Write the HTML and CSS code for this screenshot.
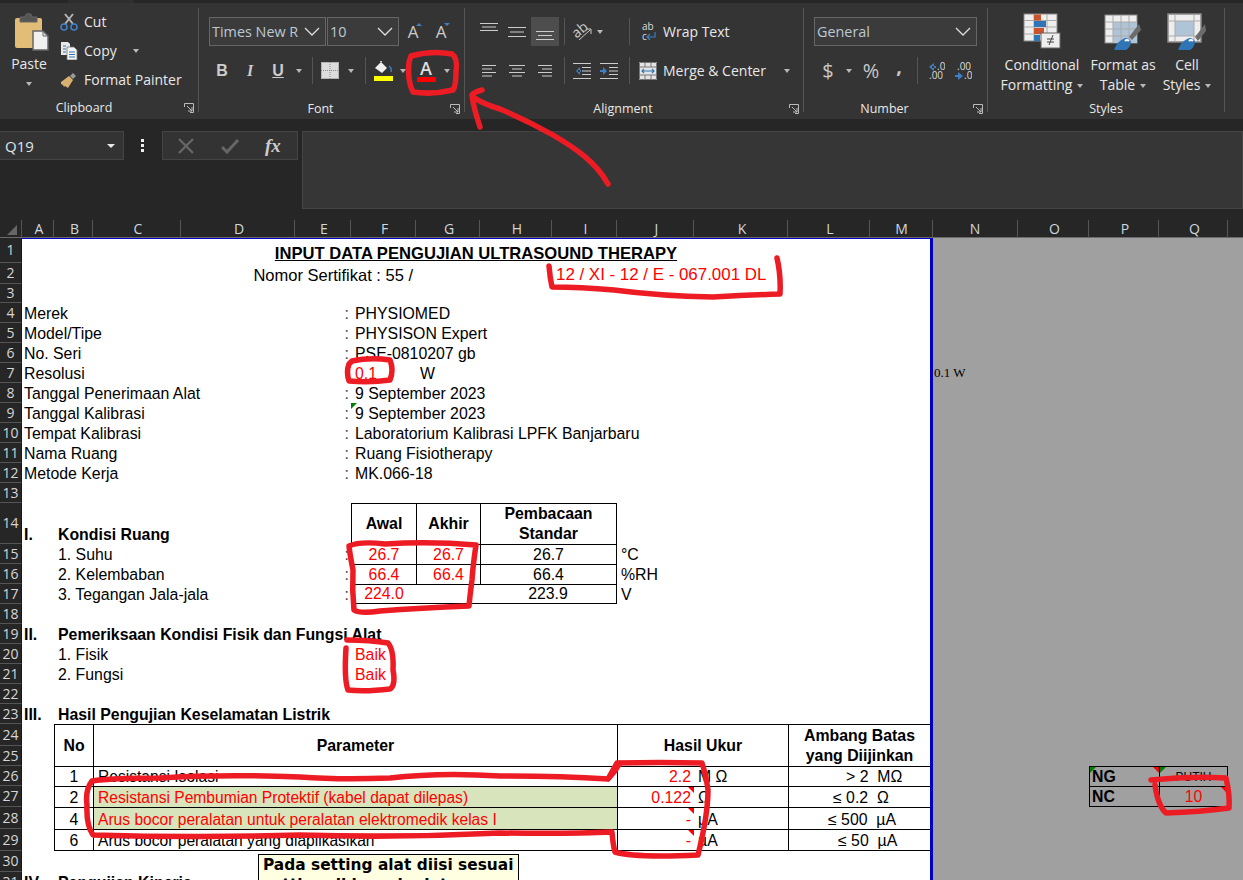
FILE: index.html
```html
<!DOCTYPE html>
<html lang="id">
<head>
<meta charset="utf-8">
<title>Input Data Pengujian Ultrasound Therapy</title>
<link rel="stylesheet" href="styles.css">
</head>
<body>
<div class="app">
  <div class="strip"><span class="stub"></span></div>
  <div class="ribbon">
    <section class="group g-clip">
      <div class="body clip-body">
        <div class="paste">
          <svg class="paste-i" width="36" height="38" viewBox="0 0 36 38"><rect x="1" y="5" width="27" height="30" rx="2" fill="#e1bd78"/><path d="M6 9V4h5a3.500 3.500 0 0 1 7 0h5v5z" fill="#555" stroke="#666"/><path d="M19 18h10l5 5v14H19z" fill="#f0f0f0" stroke="#666" stroke-width="1.500"/><path d="M29 18v5h5" fill="none" stroke="#666"/></svg>
          <span class="paste-t">Paste</span>
          <i class="caret"></i>
        </div>
        <div class="clip-list">
          <div class="clip-row"><svg width="18" height="18" viewBox="0 0 18 18"><path d="M5 11 13 1M13 11 5 1" stroke="#b5b5b5" stroke-width="2"/><circle cx="4" cy="14" r="3" fill="none" stroke="#3f7fc4" stroke-width="1.600"/><circle cx="14" cy="14" r="3" fill="none" stroke="#3f7fc4" stroke-width="1.600"/></svg><span>Cut</span></div>
          <div class="clip-row"><svg width="18" height="18" viewBox="0 0 18 18"><path d="M1 0h7l2 2v11H1z" fill="#e8e8e8"/><path d="M7 5h7l3 3v10H7z" fill="#f4f4f4" stroke="#777" stroke-width=".8"/><path d="M3 4h3M3 7h3M3 10h3M9 10h6M9 12.500h6M9 15h6" stroke="#2f75b5"/></svg><span>Copy</span><i class="caret copy-caret"></i></div>
          <div class="clip-row"><svg width="18" height="18" viewBox="0 0 18 18"><path d="M1 11 9 5l4 4-5 8-3-2-1 1-1-2-2-1z" fill="#d9b26f"/><path d="M10 5l3-3 3 3-3 3z" fill="#9a9a9a"/></svg><span>Format Painter</span></div>
        </div>
      </div>
      <footer class="label"><span class="label-t clip-t">Clipboard</span><svg class="launch" width="10" height="10" viewBox="0 0 10 10"><path d="M.5 4V.5h9v9H6M3 3l5 5M8 4v4H4" fill="none" stroke="#bbb"/></svg></footer>
    </section>

    <section class="group g-font">
      <div class="body">
        <div class="row">
          <div class="select s-font"><span>Times New R</span><svg class="chev" width="16" height="9" viewBox="0 0 16 9"><path d="M1 1l7 7 7-7" fill="none" stroke="#ddd" stroke-width="1.300"/></svg></div>
          <div class="select s-size"><span>10</span><svg class="chev" width="16" height="9" viewBox="0 0 16 9"><path d="M1 1l7 7 7-7" fill="none" stroke="#ddd" stroke-width="1.300"/></svg></div>
          <div class="tb w28 gs">A<i class="up"></i></div>
          <div class="tb w28 gs">A<i class="down"></i></div>
        </div>
        <div class="row row2">
          <div class="tb w26 bold">B</div>
          <div class="tb w30 ital">I</div>
          <div class="tb w26 bold und">U</div>
          <div class="tb w16"><i class="caret"></i></div>
          <i class="sep"></i>
          <div class="tb w24"><svg width="18" height="17" viewBox="0 0 18 17"><rect width="18" height="17" fill="#dcdcdc"/><path d="M9 0v17M0 8.500h18" stroke="#8a8a8a" stroke-dasharray="1 1"/><rect x=".5" y=".5" width="17" height="16" fill="none" stroke="#8a8a8a" stroke-dasharray="1 1"/></svg></div>
          <div class="tb w18"><i class="caret"></i></div>
          <i class="sep"></i>
          <div class="tb w24 stack"><svg width="20" height="14" viewBox="0 0 20 14"><path d="M2 7l6-6 6 6-5 5z" fill="#f0f0f0"/><path d="M8 1V0" stroke="#ccc" stroke-width="2"/><path d="M16 5q3 2 2 6" fill="none" stroke="#3f7fc4" stroke-width="1.500"/></svg><i class="bar yellow"></i></div>
          <div class="tb w16"><i class="caret"></i></div>
          <div class="tb w30 stack"><span class="fc">A</span><i class="bar bar-red"></i></div>
          <div class="tb w12"><i class="caret"></i></div>
        </div>
      </div>
      <footer class="label"><span class="label-t">Font</span><svg class="launch" width="10" height="10" viewBox="0 0 10 10"><path d="M.5 4V.5h9v9H6M3 3l5 5M8 4v4H4" fill="none" stroke="#bbb"/></svg></footer>
    </section>

    <section class="group g-align">
      <div class="body">
        <div class="row">
          <div class="tb w28"><svg width="18" height="18" viewBox="0 0 18 18"><path d="M0 .5h18M2 4h14M0 7.500h18" stroke="#ccc"/></svg></div>
          <div class="tb w28"><svg width="18" height="18" viewBox="0 0 18 18"><path d="M0 4.500h18M2 9h14M0 13.500h18" stroke="#ccc"/></svg></div>
          <div class="tb w28 active"><svg width="18" height="18" viewBox="0 0 18 18"><path d="M0 8.500h18M2 12.500h14M0 16.500h18" stroke="#ccc"/></svg></div>
          <i class="sep"></i>
          <div class="tb w24"><svg width="20" height="20" viewBox="0 0 20 20"><text x="1" y="13" class="orient" transform="rotate(-40 8 10)">ab</text><path d="M7 18 18 8M14 7h5v5" fill="none" stroke="#ccc"/></svg></div>
          <div class="tb w12"><i class="caret"></i></div>
          <div class="w18"></div>
          <i class="sep"></i>
          <div class="btn"><svg class="wrap-i" width="18" height="20" viewBox="0 0 18 20"><text x="3" y="8" class="small-t">ab</text><text x="3" y="18" class="small-t">c</text><path d="M16 10v5H9M11 12l-3 3 3 3" fill="none" stroke="#3f7fc4" stroke-width="1.200"/></svg><span>Wrap Text</span></div>
        </div>
        <div class="row row2">
          <div class="tb w28"><svg width="14" height="12" viewBox="0 0 14 12"><path d="M0 .5h14M0 4h10M0 7.500h14M0 11h10" stroke="#ccc"/></svg></div>
          <div class="tb w28"><svg width="16" height="12" viewBox="0 0 16 12"><path d="M0 .5h16M3 4h10M0 7.500h16M3 11h10" stroke="#ccc"/></svg></div>
          <div class="tb w28"><svg width="14" height="12" viewBox="0 0 14 12"><path d="M0 .5h14M4 4h10M0 7.500h14M4 11h10" stroke="#ccc"/></svg></div>
          <i class="sep"></i>
          <div class="tb w24"><svg width="18" height="16" viewBox="0 0 18 16"><path d="M0 .5h18M9 4.500h9M9 8h9M9 11.500h9M0 15.500h18" stroke="#ccc"/><path d="M7 4 3 8l4 4zM5 7h3v2H5z" fill="#3f7fc4"/></svg></div>
          <div class="tb w30"><svg width="18" height="16" viewBox="0 0 18 16"><path d="M0 .5h18M9 4.500h9M9 8h9M9 11.500h9M0 15.500h18" stroke="#ccc"/><path d="M3 4l4 4-4 4zM0 7h4v2H0z" fill="#3f7fc4"/></svg></div>
          <i class="sep"></i>
          <div class="btn"><svg width="18" height="18" viewBox="0 0 18 18"><rect width="18" height="18" fill="#e4e4e4"/><path d="M.5.500h17v17H.5zM0 5h18M0 13h18M6 0v5M12 0v5M6 13v5M12 13v5" fill="none" stroke="#777"/><path d="M3 9h12M5 7 3 9l2 2M13 7l2 2-2 2" fill="none" stroke="#2f75b5" stroke-width="1.200"/></svg><span>Merge &amp; Center</span><i class="caret merge-caret"></i></div>
        </div>
      </div>
      <footer class="label"><span class="label-t">Alignment</span><svg class="launch" width="10" height="10" viewBox="0 0 10 10"><path d="M.5 4V.5h9v9H6M3 3l5 5M8 4v4H4" fill="none" stroke="#bbb"/></svg></footer>
    </section>

    <section class="group g-num">
      <div class="body">
        <div class="row">
          <div class="select s-num"><span>General</span><svg class="chev" width="16" height="9" viewBox="0 0 16 9"><path d="M1 1l7 7 7-7" fill="none" stroke="#ddd" stroke-width="1.300"/></svg></div>
        </div>
        <div class="row row2">
          <div class="tb w28 big">$</div>
          <div class="tb w14"><i class="caret"></i></div>
          <div class="tb w30 big">%</div>
          <div class="tb w26 big comma">,</div>
          <i class="sep"></i>
          <div class="tb w26"><svg width="18" height="18" viewBox="0 0 18 18"><path d="M7 1 2 5l5 4zM5 4h4v2H5z" fill="#3f7fc4"/><text x="10" y="8" class="dec">.0</text><text x="2" y="17" class="dec">.00</text></svg></div>
          <div class="tb w28"><svg width="18" height="18" viewBox="0 0 18 18"><text x="3" y="8" class="dec">.00</text><path d="M4 10l5 4-5 4zM1 13h4v2H1z" fill="#3f7fc4"/><text x="10" y="17" class="dec">.0</text></svg></div>
        </div>
      </div>
      <footer class="label"><span class="label-t">Number</span><svg class="launch" width="10" height="10" viewBox="0 0 10 10"><path d="M.5 4V.5h9v9H6M3 3l5 5M8 4v4H4" fill="none" stroke="#bbb"/></svg></footer>
    </section>

    <section class="group g-styles">
      <div class="body styles-body">
        <div class="st st1">
          <svg width="38" height="38" viewBox="0 0 38 38"><rect x="1" y="1" width="33" height="27" fill="#eee" stroke="#888"/><path d="M1 7.500h33M1 14h33M1 21h33M11 1v27M24 1v27" stroke="#aaa"/><rect x="11" y="1.500" width="7" height="6" fill="#c9532d"/><rect x="11" y="8" width="12" height="6" fill="#2f75b5"/><rect x="11" y="15" width="10" height="6" fill="#c9532d"/><rect x="11" y="22" width="6" height="6" fill="#2f75b5"/><rect x="18" y="20" width="19" height="15" fill="#eee" stroke="#666"/><path d="M24 26h7M24 29h7M26 32l4-10" stroke="#444" fill="none"/></svg>
          <span class="st-t">Conditional<br>Formatting<i class="caret in"></i></span>
        </div>
        <div class="st st2">
          <svg width="38" height="38" viewBox="0 0 38 38"><rect x="1" y="2" width="32" height="28" fill="#eee" stroke="#888"/><rect x="9" y="9" width="24" height="21" fill="#b0c4d8"/><path d="M1 9h32M1 16h32M1 23h32M9 2v28M17 2v28M25 2v28" stroke="#aaa"/><path d="M25 24 35 11l2 6-9 10z" fill="#6b6b6b"/><path d="M10 37q3-9 11-12 5 0 6 4-1 6-5 8z" fill="#2f75b5"/><path d="M21 28q2-2 4 0" stroke="#fff" stroke-width="2" fill="none"/></svg>
          <span class="st-t">Format as<br>Table<i class="caret in"></i></span>
        </div>
        <div class="st st3">
          <svg width="40" height="38" viewBox="0 0 40 38"><rect x="1" y="1" width="33" height="28" fill="#eee" stroke="#888" stroke-width="1.500"/><rect x="8" y="8" width="19" height="15" fill="#b0c4d8"/><path d="M1 8h33M1 23h33M8 1v28M27 1v28" stroke="#aaa"/><path d="M28 24 38 11l1 7-8 10z" fill="#6b6b6b"/><path d="M11 37q3-9 11-12 5 0 6 4-1 6-5 8z" fill="#2f75b5"/><path d="M22 28q2-2 4 0" stroke="#fff" stroke-width="2" fill="none"/></svg>
          <span class="st-t">Cell<br>Styles<i class="caret in"></i></span>
        </div>
      </div>
      <footer class="label"><span class="label-t styles-t">Styles</span></footer>
    </section>
  </div>

  <div class="formula">
    <div class="namebox"><span>Q19</span><i class="caret light"></i></div>
    <div class="dots"><i></i><i></i><i></i></div>
    <div class="cmds">
      <svg width="16" height="16" viewBox="0 0 16 16"><path d="M1 1l14 14M15 1 1 15" stroke="#666" stroke-width="2.400"/></svg>
      <svg width="18" height="16" viewBox="0 0 18 16"><path d="M1 9l5 5L17 2" fill="none" stroke="#666" stroke-width="3"/></svg>
      <span class="fx">fx</span>
    </div>
    <div class="input"></div>
  </div>

  <div class="sheet">
    <table class="grid">
      <colgroup>
        <col class="c0"><col class="ca"><col class="cb"><col class="cc"><col class="cd"><col class="ce"><col class="cf"><col class="cg"><col class="ch"><col class="ci"><col class="cj"><col class="ck"><col class="cl"><col class="cm"><col class="cn"><col class="co"><col class="cp"><col class="cq"><col class="cr">
      </colgroup>
      <thead>
        <tr class="head">
          <th class="corner"><i></i></th><th>A</th><th>B</th><th>C</th><th>D</th><th>E</th><th>F</th><th>G</th><th>H</th><th>I</th><th>J</th><th>K</th><th>L</th><th class="hm">M</th><th class="hn">N</th><th>O</th><th>P</th><th>Q</th><th class="hr"></th>
        </tr>
      </thead>
      <tbody>
        <tr class="h25 first"><th>1</th><td colspan="13" class="title">INPUT DATA PENGUJIAN ULTRASOUND THERAPY</td><td colspan="5" class="out"></td></tr>
        <tr class="h21"><th>2</th><td colspan="6" class="cert">Nomor Sertifikat : 55 /</td><td colspan="2"></td><td colspan="5" class="red p4 serial">12 / XI - 12 / E - 067.001 DL</td><td colspan="5" class="out"></td></tr>
        <tr class="h19"><th>3</th><td colspan="13"></td><td colspan="5" class="out"></td></tr>
        <tr><th>4</th><td colspan="4" class="p2">Merek</td><td class="colon">:</td><td colspan="8" class="p4">PHYSIOMED</td><td colspan="5" class="out"></td></tr>
        <tr><th>5</th><td colspan="4" class="p2">Model/Tipe</td><td class="colon">:</td><td colspan="8" class="p4">PHYSISON Expert</td><td colspan="5" class="out"></td></tr>
        <tr><th>6</th><td colspan="4" class="p2">No. Seri</td><td class="colon">:</td><td colspan="8" class="p4">PSE-0810207 gb</td><td colspan="5" class="out"></td></tr>
        <tr><th>7</th><td colspan="4" class="p2">Resolusi</td><td class="colon">:</td><td class="red p4">0.1</td><td class="p4">W</td><td colspan="6"></td><td colspan="5" class="out note">0.1 W</td></tr>
        <tr><th>8</th><td colspan="4" class="p2">Tanggal Penerimaan Alat</td><td class="colon">:</td><td colspan="8" class="p4">9 September 2023</td><td colspan="5" class="out"></td></tr>
        <tr><th>9</th><td colspan="4" class="p2">Tanggal Kalibrasi</td><td class="colon">:</td><td colspan="8" class="p4 tg">9 September 2023</td><td colspan="5" class="out"></td></tr>
        <tr><th>10</th><td colspan="4" class="p2">Tempat Kalibrasi</td><td class="colon">:</td><td colspan="8" class="p4">Laboratorium Kalibrasi LPFK Banjarbaru</td><td colspan="5" class="out"></td></tr>
        <tr><th>11</th><td colspan="4" class="p2">Nama Ruang</td><td class="colon">:</td><td colspan="8" class="p4">Ruang Fisiotherapy</td><td colspan="5" class="out"></td></tr>
        <tr><th>12</th><td colspan="4" class="p2">Metode Kerja</td><td class="colon">:</td><td colspan="8" class="p4">MK.066-18</td><td colspan="5" class="out"></td></tr>
        <tr><th>13</th><td colspan="13"></td><td colspan="5" class="out"></td></tr>
        <tr class="h40"><th>14</th><td class="b p2">I.</td><td colspan="4" class="b p4">Kondisi Ruang</td><td class="b ctr mid bt bl">Awal</td><td class="b ctr mid bt bl">Akhir</td><td colspan="2" class="b ctr mid bt bl br">Pembacaan<br>Standar</td><td colspan="4"></td><td colspan="5" class="out"></td></tr>
        <tr><th>15</th><td></td><td colspan="3" class="p4">1. Suhu</td><td class="colon">:</td><td class="red ctr bt bl">26.7</td><td class="red ctr bt bl">26.7</td><td colspan="2" class="ctr bt bl br">26.7</td><td colspan="4" class="p4">°C</td><td colspan="5" class="out"></td></tr>
        <tr><th>16</th><td></td><td colspan="3" class="p4">2. Kelembaban</td><td class="colon">:</td><td class="red ctr bt bl">66.4</td><td class="red ctr bt bl">66.4</td><td colspan="2" class="ctr bt bl br">66.4</td><td colspan="4" class="p4">%RH</td><td colspan="5" class="out"></td></tr>
        <tr><th>17</th><td></td><td colspan="3" class="p4">3. Tegangan Jala-jala</td><td class="colon">:</td><td class="red ctr bt bl bb">224.0</td><td class="bt bb"></td><td colspan="2" class="ctr bt br bb">223.9</td><td colspan="4" class="p4">V</td><td colspan="5" class="out"></td></tr>
        <tr><th>18</th><td colspan="13"></td><td colspan="5" class="out"></td></tr>
        <tr><th>19</th><td class="b p2">II.</td><td colspan="12" class="b p4">Pemeriksaan Kondisi Fisik dan Fungsi Alat</td><td colspan="5" class="out"></td></tr>
        <tr><th>20</th><td></td><td colspan="4" class="p4">1. Fisik</td><td colspan="8" class="red p4">Baik</td><td colspan="5" class="out"></td></tr>
        <tr><th>21</th><td></td><td colspan="4" class="p4">2. Fungsi</td><td colspan="8" class="red p4">Baik</td><td colspan="5" class="out"></td></tr>
        <tr><th>22</th><td colspan="13"></td><td colspan="5" class="out"></td></tr>
        <tr><th>23</th><td class="b p2">III.</td><td colspan="12" class="b p4">Hasil Pengujian Keselamatan Listrik</td><td colspan="5" class="out"></td></tr>
        <tr class="h22"><th>24</th><td rowspan="2"></td><td rowspan="2" class="b ctr mid bt bl">No</td><td rowspan="2" colspan="7" class="b ctr mid bt bl">Parameter</td><td rowspan="2" colspan="2" class="b ctr mid bt bl">Hasil Ukur</td><td rowspan="2" colspan="2" class="b ctr mid bt bl">Ambang Batas<br>yang Diijinkan</td><td colspan="5" class="out"></td></tr>
        <tr><th>25</th><td colspan="5" class="out"></td></tr>
        <tr><th>26</th><td></td><td class="ctr bt bl">1</td><td colspan="7" class="p4 bt bl param">Resistansi Isolasi</td><td class="red rt bt bl">2.2</td><td class="p4 bt">M Ω</td><td colspan="2" class="bt bl a1">&gt; 2&nbsp; MΩ</td><td colspan="2" class="out"></td><td class="b bt bl p2 box tg tr">NG</td><td class="ctr bt bl br box tg small">PUTIH</td><td class="out2"></td></tr>
        <tr class="h21"><th>27</th><td></td><td class="ctr bt bl">2</td><td colspan="7" class="p4 bt bl red fill param">Resistansi Pembumian Protektif (kabel dapat dilepas)</td><td class="red rt bt bl tr">0.122</td><td class="p4 bt">Ω</td><td colspan="2" class="bt bl a2">≤ 0.2&nbsp; Ω</td><td colspan="2" class="out"></td><td class="b bt bl bb p2 box">NC</td><td class="red ctr bt bl br bb box tr">10</td><td class="out2"></td></tr>
        <tr class="h22"><th>28</th><td></td><td class="ctr bt bl">4</td><td colspan="7" class="p4 bt bl red fill param">Arus bocor peralatan untuk peralatan elektromedik kelas I</td><td class="red rt bt bl tr">-</td><td class="p4 bt">µA</td><td colspan="2" class="bt bl a3">≤ 500&nbsp; µA</td><td colspan="5" class="out"></td></tr>
        <tr class="h22"><th>29</th><td></td><td class="ctr bt bl bb">6</td><td colspan="7" class="p4 bt bl bb param">Arus bocor peralatan yang diaplikasikan</td><td class="red rt bt bl bb tr">-</td><td class="p4 bt bb">µA</td><td colspan="2" class="bt bl bb a4">≤ 50&nbsp; µA</td><td colspan="5" class="out"></td></tr>
        <tr class="h21"><th>30</th><td colspan="13"></td><td colspan="5" class="out"></td></tr>
        <tr><th>31</th><td class="b p2">IV.</td><td colspan="12" class="b p4">Pengujian Kinerja</td><td colspan="5" class="out"></td></tr>
      </tbody>
    </table>
    <div class="comment">Pada setting alat diisi sesuai<br>setting di bawah alat</div>
  </div>

  <svg class="marks" width="1243" height="880" viewBox="0 0 1243 880" aria-hidden="true">
    <path d="M411 56Q432 50 452 54Q458 58 456 72Q456 86 453 90Q432 95 413 92Q407 80 409 62Z"/>
    <path d="M608 184C596 162 575 148 553 135C530 122 512 114 500 109C490 106 480 102 473 97M480 127C476 115 473 105 472 95C474 92 478 91 482 90"/>
    <path d="M549 266Q550 278 552 287Q580 287 614 290Q660 296 713 297Q750 295 780 294Q781 275 777 258"/>
    <path d="M352 361Q370 357 390 360Q394 370 390 380Q370 383 349 381Q346 372 349 364Z"/>
    <path d="M349 546Q360 541 385 544Q430 541 476 545Q473 565 472 580Q470 595 469 606Q420 608 380 611Q360 614 354 610Q352 590 353 570Q350 555 349 546Z"/>
    <path d="M347 640Q370 640 388 643Q394 650 393 670Q396 685 390 689Q365 692 348 690Q344 680 346 648"/>
    <path d="M620 763Q615 772 608 779Q560 776 500 776Q440 772 390 778Q340 780 300 777Q220 774 160 778Q110 778 92 781Q85 790 87 805Q86 825 93 835Q200 838 300 835Q400 838 500 833Q570 834 612 832Q613 845 615 852Q635 858 698 855Q708 815 708 790Q706 775 702 763Q660 762 617 763Q612 772 608 779"/>
    <path d="M1151 780Q1190 776 1226 778Q1230 795 1229 808Q1200 812 1166 813Q1158 806 1155 785"/>
  </svg>
</div>
</body>
</html>
```
FILE: styles.css
```css
* { box-sizing: border-box; }
html, body { margin: 0; height: 100%; background: #262626; }
i { display: block; font-style: normal; }
.app {
  position: relative;
  width: 1243px;
  height: 880px;
  overflow: hidden;
  display: flex;
  flex-direction: column;
  background: #262626;
  color: #e8e8e8;
  font: 14px/20px "Open Sans", "Noto Sans", sans-serif;
}

/* top strip */
.strip { height: 3px; background: #262626; padding-left: 68px; flex: none; }
.stub { display: block; width: 66px; height: 3px; background: #2e2e2e; }

/* ribbon */
.ribbon { display: flex; height: 116px; flex: none; background: #343434; }
.group {
  height: 104px;
  margin-top: 5px;
  border-right: 1px solid #555;
  display: flex;
  flex-direction: column;
  flex: none;
}
.g-clip { width: 199px; }
.g-font { width: 266px; }
.g-align { width: 339px; }
.g-num { width: 184px; }
.g-styles { width: 237px; }
.body { height: 93px; padding: 9px 0 0 10px; flex: none; }
.label {
  display: grid;
  grid-template-columns: 1fr 22px;
  align-items: center;
  height: 16px;
  margin-bottom: -13px;
  flex: none;
}
.label-t { text-align: center; font-size: 12.5px; line-height: 16px; }
.clip-t { padding-right: 8px; }
.g-styles .label { grid-template-columns: 1fr; }
.launch { justify-self: start; margin-left: 8px; }

.row { display: flex; align-items: center; height: 29px; }
.row2 { margin-top: 10px; }
.tb { display: flex; align-items: center; justify-content: center; height: 29px; flex: none; color: #ccc; position: relative; }
.w12 { width: 12px; flex: none; }
.w14 { width: 14px; flex: none; }
.w16 { width: 16px; flex: none; }
.w18 { width: 18px; flex: none; }
.w24 { width: 24px; flex: none; }
.w26 { width: 26px; flex: none; }
.w28 { width: 28px; flex: none; }
.w30 { width: 30px; flex: none; }
.active { background: #4d4d4d; }
.sep { width: 1px; height: 27px; background: #555; margin: 0 5px; flex: none; }
.caret { width: 0; height: 0; border: 3.5px solid transparent; border-top: 4px solid #b8b8b8; border-bottom: 0; flex: none; }
.caret.in { display: inline-block; margin-left: 5px; vertical-align: middle; }
.caret.light { border-top-color: #e8e8e8; border-width: 4px 4px 0; }
.bold { font: bold 16px/20px "Liberation Sans", sans-serif; }
.ital { font: italic bold 16px/20px "Liberation Serif", serif; }
.und { text-decoration: underline; }
.gs { font-size: 17px; align-items: center; }
.up, .down { position: absolute; right: 5px; top: 6px; width: 0; height: 0; border: 3px solid transparent; }
.up { border-bottom: 3px solid #3f7fc4; border-top: 0; }
.down { border-top: 3px solid #3f7fc4; border-bottom: 0; }
.stack { flex-direction: column; }
.bar { width: 19px; height: 5px; margin-top: 1px; }
.yellow { background: #ffff00; }
.bar-red { background: #ff0000; }
.fc { font-size: 18px; line-height: 16px; font-weight: 600; color: #ddd; }

.select {
  display: flex;
  align-items: center;
  justify-content: space-between;
  height: 29px;
  background: #3b3b3b;
  border: 1px solid #666;
  padding: 0 5px 0 2px;
  color: #bcc8d2;
  font-size: 14.4px;
  flex: none;
}
.s-font { width: 117px; margin-right: 1px; }
.s-font span { width: 90px; overflow: hidden; white-space: nowrap; }
.s-size { width: 72px; }
.s-num { width: 163px; }
.chev { flex: none; }

/* clipboard */
.clip-body { display: flex; padding: 0; margin-top: -1px; }
.paste { width: 60px; display: flex; flex-direction: column; align-items: center; padding: 6px 0 0; flex: none; }
.paste-i { margin-left: 4px; }
.paste-t { margin-top: 3px; margin-right: 2px; line-height: 20px; }
.paste .caret { margin-top: 8px; margin-right: 2px; }
.clip-row { display: flex; align-items: center; gap: 6px; height: 29px; white-space: nowrap; }
.clip-row svg { flex: none; }
.copy-caret { margin-left: 10px; }

/* alignment */
.btn { display: flex; align-items: center; gap: 6px; padding-left: 4px; height: 29px; white-space: nowrap; flex: none; }
.merge-caret { margin-left: 12px; }
.wrap-i { flex: none; }
.orient { font: 14px "Open Sans", sans-serif; fill: #ccc; }
.small-t { font: 10px "Open Sans", sans-serif; fill: #ddd; }
.dec { font: 10px "Open Sans", sans-serif; fill: #ddd; }
.big { font-size: 20px; color: #c8c8c8; }
.comma { font-weight: 700; align-items: flex-start; }

/* styles */
.styles-body { display: flex; padding: 5px 0 0 12px; }
.st { display: flex; flex-direction: column; align-items: center; flex: none; }
.st svg { height: 38px; flex: none; }
.st-t { text-align: center; margin-top: 4px; line-height: 20px; white-space: nowrap; }
.st1 { width: 84px; }
.st2 { width: 78px; }
.st3 { width: 50px; }

/* formula bar */
.formula { display: flex; height: 101px; padding-top: 12px; flex: none; }
.namebox { display: flex; align-items: center; justify-content: space-between; width: 124px; height: 29px; background: #333; border: 1px solid #444; border-left: 0; padding: 0 8px 0 5px; color: #dbe6ef; font-size: 15px; flex: none; }
.dots { display: flex; flex-direction: column; justify-content: center; gap: 2px; width: 38px; height: 29px; padding-left: 17px; flex: none; }
.dots i { width: 3px; height: 3px; background: #eee; }
.cmds { display: flex; align-items: center; gap: 27px; width: 136px; height: 29px; padding-left: 15px; background: #333; border: 1px solid #444; flex: none; }
.fx { font: italic bold 19px/20px "Liberation Serif", serif; color: #ccc; margin-left: -1px; }
.input { width: 941px; height: 78px; margin-left: 4px; background: #363636; border: 1px solid #444; flex: none; }

/* sheet */
.sheet { position: relative; flex: 1; }
.grid {
  width: 1243px;
  table-layout: fixed;
  border-collapse: separate;
  border-spacing: 0;
  color: #000;
  font: 15.85px/18px "Liberation Sans", Arial, sans-serif;
}
.c0 { width: 22px; } .ca { width: 32px; } .cb { width: 39px; } .cc { width: 88px; }
.cd { width: 114px; } .ce { width: 56px; } .cf { width: 65px; } .cg { width: 64px; }
.ch { width: 72px; } .ci { width: 65px; } .cj { width: 77px; } .ck { width: 94px; }
.cl { width: 82px; } .cm { width: 60px; } .cn { width: 88px; } .co { width: 71px; }
.cp { width: 70px; } .cq { width: 69px; } .cr { width: 15px; }

tr { height: 20px; }
.h19 { height: 19px; }
.h21 { height: 21px; }
.h22 { height: 22px; }
.h25 { height: 25px; }
.h40 { height: 40px; }
.head { height: 18px; }
.head th {
  font: 14px/16px "Open Sans", sans-serif;
  color: #cfd8df;
  background: #262626;
  border-right: 1px solid #555;
  border-bottom: 1px solid #6a6a6a;
  padding: 0 0 0 3px;
}
.head .hm { border-right: 0; }
.head .hn { background: linear-gradient(to right, transparent 2px, #555 2px, #555 3px, transparent 3px), #262626; }
.head .hr { border-right: 0; }
.head .corner { padding: 0; position: relative; }
.corner i { position: absolute; left: 7px; bottom: 2px; width: 0; height: 0; border-left: 10px solid transparent; border-bottom: 10px solid #666; }
tbody th {
  font: 14px/16px "Open Sans", sans-serif;
  color: #d6d6d6;
  background: #262626;
  border-bottom: 1px solid #555;
  border-right: 1px solid #0000c8;
  padding: 0;
  overflow: hidden;
}
td {
  position: relative;
  background: #fff;
  padding: 0;
  white-space: nowrap;
  vertical-align: bottom;
}
.first td { border-top: 1px solid #0000c8; }
.first td.out { border-top: 0; }
.out { background: #a0a0a0; box-shadow: inset 3px 0 0 #0000c8; }
.out2 { background: #a0a0a0; }
.note { font: 13px/16px "Liberation Serif", serif; padding-left: 4px; vertical-align: middle; }
.title { font-size: 16.6px; font-weight: bold; text-decoration: underline; text-align: center; }
.cert { font-size: 16.5px; text-align: right; padding-right: 3px; }
.serial { font-size: 16.9px; }
.param { font-size: 15.6px; }
.red { color: #ff0000; }
.b { font-weight: bold; }
.p2 { padding-left: 2px; }
.p4 { padding-left: 4px; }
.colon { text-align: right; padding-right: 2px; color: #444; }
.ctr { text-align: center; }
.rt { text-align: right; padding-right: 3px; }
.mid { vertical-align: middle; line-height: 20px; }
.bt { border-top: 1px solid #000; }
.bb { border-bottom: 1px solid #000; }
.bl { border-left: 1px solid #000; }
.br { border-right: 1px solid #000; }
.fill { background: #d8e4bc; }
.box { background: #a0a0a0; }
.small { font-size: 12px; }
.a1 { padding-left: 57px; }
.a2 { padding-left: 44px; }
.a3 { padding-left: 39px; }
.a4 { padding-left: 49px; }
.tg::before, .tr::after { content: ""; position: absolute; top: 0; width: 0; height: 0; }
.tg::before { left: 0; border-top: 6px solid #008000; border-right: 6px solid transparent; }
.tr::after { right: 0; border-top: 6px solid #ff0000; border-left: 6px solid transparent; }
.comment {
  position: absolute;
  left: 258px;
  top: 634px;
  width: 261px;
  height: 60px;
  padding: 0 4px;
  background: #ffffe1;
  border: 1px solid #000;
  color: #000;
  font: bold 15.4px/20px "DejaVu Sans", sans-serif;
  white-space: nowrap;
}

/* annotations drawn over the screenshot */
.marks { position: absolute; left: 0; top: 0; pointer-events: none; }
.marks path { fill: none; stroke: #ed1c24; stroke-width: 5.5; stroke-linecap: round; stroke-linejoin: round; }
```
